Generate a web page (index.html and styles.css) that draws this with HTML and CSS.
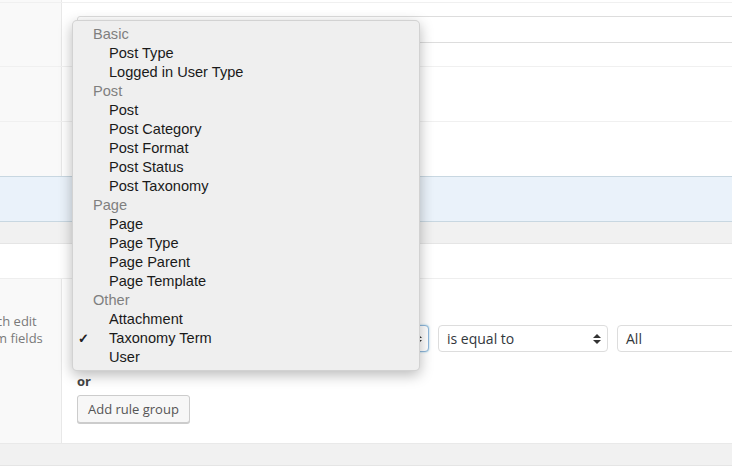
FILE: index.html
```html
<!DOCTYPE html>
<html>
<head>
<meta charset="utf-8">
<link rel="stylesheet" href="styles.css">
</head>
<body>
<div class="page">
  <div class="row r-top"><div class="label"></div><div class="field"></div></div>
  <div class="row r-input"><div class="label"></div><div class="field"><div class="text-input"></div></div></div>
  <div class="row r-plain"><div class="label"></div><div class="field"></div></div>
  <div class="row r-plain"><div class="label"></div><div class="field"></div></div>
  <div class="row r-blue"></div>
  <div class="row r-grey"></div>
  <div class="row r-white"></div>
  <div class="row r-rules">
    <div class="label"><p class="desc"><span>ch edit</span><span>m fields</span></p></div>
    <div class="field rules">
      <div class="rules-title"></div>
      <div class="rule">
        <div class="select sel-param focus"><i class="arrows"></i></div>
        <div class="select sel-op"><span>is equal to</span><i class="arrows"></i></div>
        <div class="select sel-val"><span>All</span></div>
      </div>
      <p class="or">or</p>
      <button class="btn">Add rule group</button>
    </div>
  </div>
  <div class="row r-foot"></div>
  <div class="row r-end"></div>

  <div class="menu">
    <div class="grp">Basic</div>
    <div class="opt">Post Type</div>
    <div class="opt">Logged in User Type</div>
    <div class="grp">Post</div>
    <div class="opt">Post</div>
    <div class="opt">Post Category</div>
    <div class="opt">Post Format</div>
    <div class="opt">Post Status</div>
    <div class="opt">Post Taxonomy</div>
    <div class="grp">Page</div>
    <div class="opt">Page</div>
    <div class="opt">Page Type</div>
    <div class="opt">Page Parent</div>
    <div class="opt">Page Template</div>
    <div class="grp">Other</div>
    <div class="opt">Attachment</div>
    <div class="opt checked">Taxonomy Term</div>
    <div class="opt">User</div>
  </div>
</div>
</body>
</html>
```

FILE: styles.css
```css
* { box-sizing: border-box; }
html, body { margin: 0; padding: 0; }
body {
  background: #fff;
  font-family: "Open Sans", "Liberation Sans", sans-serif;
  font-size: 13px;
  color: #333;
  width: 732px;
  height: 466px;
  overflow: hidden;
}
.page { position: relative; width: 732px; height: 466px; overflow: hidden; }
.row { display: flex; width: 100%; }
.label {
  width: 62px;
  flex: none;
  background: #f9f9f9;
  border-right: 1px solid #e8e8e8;
}
.field { flex: 1; padding-left: 15px; }

.r-top { height: 3px; border-bottom: 1px solid #f0f0f0; }
.r-input { height: 64px; border-bottom: 1px solid #f0f0f0; }
.r-input .field { padding-top: 13px; }
.text-input {
  height: 27px;
  margin-right: -10px;
  border: 1px solid #ddd;
  border-radius: 3px;
  background: #fff;
}
.r-plain { height: 55px; border-bottom: 1px solid #f0f0f0; }
.r-plain:nth-of-type(4) { height: 54px; border-bottom: none; }
.r-blue {
  height: 46px;
  background: #eaf2fa;
  border-top: 1px solid #c8d7e1;
  border-bottom: 1px solid #c8d7e1;
}
.r-grey { height: 21px; background: #f1f1f1; }
.r-white { height: 36px; border-top: 1px solid #e5e5e5; border-bottom: 1px solid #eee; }

.r-rules { height: 164px; }
.desc {
  margin: 34px 0 0 -4px;
  color: #7a7a7a;
  font-size: 13px;
  line-height: 17px;
  white-space: nowrap;
}
.desc span { display: block; }
.desc span + span { margin-left: -1px; }
.rules { padding-top: 16px; }
.rules-title { margin: 0 0 10px; height: 20px; }
.rule { display: flex; gap: 9px; height: 27px; }
.select {
  position: relative;
  height: 27px;
  border: 1px solid #ddd;
  border-radius: 4px;
  background: #fff;
  color: #32373c;
  font-size: 14px;
  line-height: 25px;
  padding-left: 8px;
  white-space: nowrap;
  overflow: hidden;
}
.sel-param { width: 352px; }
.sel-op { width: 170px; }
.sel-val { flex: 1; margin-right: -20px; }
.focus { border-color: #8fb8dc; box-shadow: 0 0 2px rgba(30,140,190,.5); }
.arrows {
  position: absolute;
  right: 6px;
  top: 8px;
  width: 8px;
  height: 10px;
}
.arrows::before, .arrows::after {
  content: "";
  position: absolute;
  left: 0;
  border-left: 4px solid transparent;
  border-right: 4px solid transparent;
}
.arrows::before { top: 0; border-bottom: 4px solid #333; }
.arrows::after { bottom: 0; border-top: 4px solid #333; }

.or { margin: 20px 0 0; font-weight: 700; color: #444; line-height: 18px; }
.btn {
  margin-top: 5px;
  height: 28px;
  padding: 0 10px;
  border: 1px solid #ccc;
  border-radius: 3px;
  background: #f7f7f7;
  box-shadow: 0 1px 0 #ccc;
  color: #555;
  font-family: "Open Sans", "Liberation Sans", sans-serif;
  font-size: 13px;
  line-height: 26px;
}

.r-foot { height: 22px; background: #f1f1f1; border-top: 1px solid #e9e9e9; }
.r-end { height: 3px; border-top: 1px solid #e5e5e5; background: #f7f7f7; }

.menu {
  position: absolute;
  left: 72px;
  top: 20px;
  width: 348px;
  height: 351px;
  padding-top: 4px;
  background: #efefef;
  border: 1px solid rgba(0,0,0,.12);
  border-radius: 5px;
  box-shadow: 0 4px 14px rgba(0,0,0,.28);
  font-family: "Liberation Sans", Arial, sans-serif;
  font-size: 14.6px;
}
.grp, .opt { height: 19px; line-height: 19px; white-space: nowrap; }
.grp { padding-left: 20px; color: #7f7f7f; }
.opt { padding-left: 36px; color: #1a1a1a; position: relative; }
.checked::before {
  content: "\2713";
  position: absolute;
  left: 5px;
  top: 0;
  font-size: 13px;
  font-weight: 700;
  color: #222;
}
```
